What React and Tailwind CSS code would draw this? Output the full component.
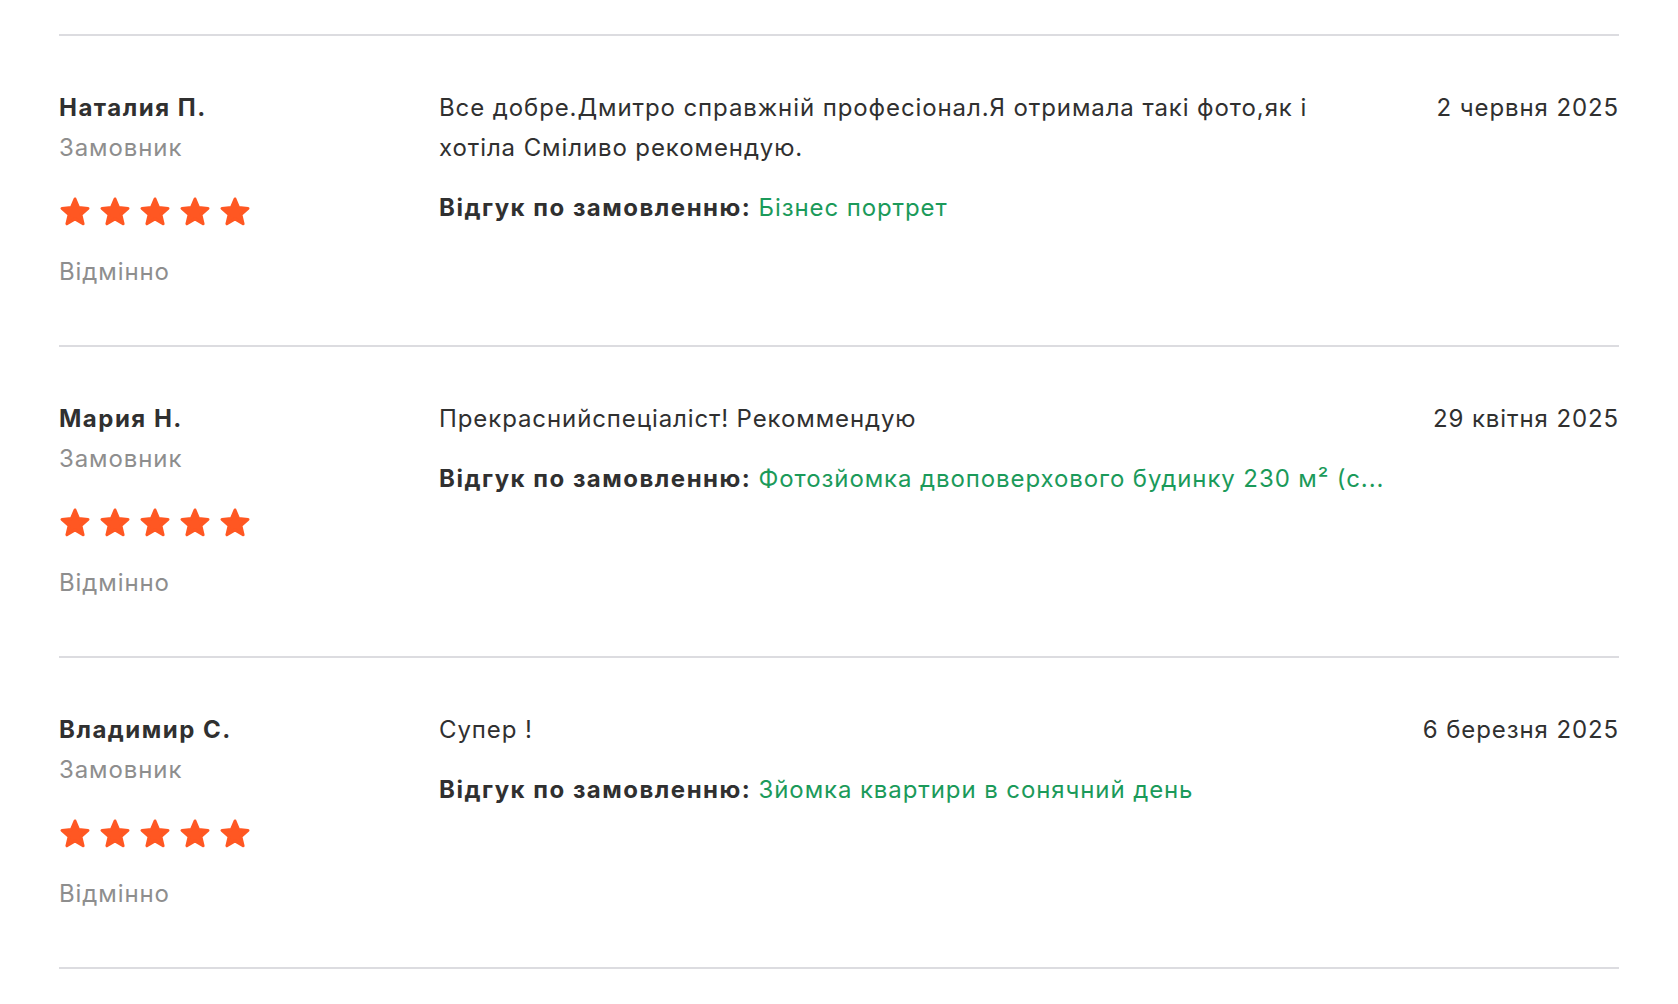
const reviews = [
  {
    name: "Наталия П.",
    text: "Все добре.Дмитро справжній професіонал.Я отримала такі фото,як і хотіла Сміливо рекомендую.",
    order: "Бізнес портрет",
    date: "2 червня 2025",
  },
  {
    name: "Мария Н.",
    text: "Прекраснийспеціаліст! Рекоммендую",
    order: "Фотозйомка двоповерхового будинку 230 м² (с...",
    date: "29 квітня 2025",
  },
  {
    name: "Владимир С.",
    text: "Супер !",
    order: "Зйомка квартири в сонячний день",
    date: "6 березня 2025",
  },
];

const Star = () => (
  <svg width="32" height="32" viewBox="0 0 32 32" className="shrink-0">
    <polygon
      points="16,3 19.6,11.6 29,12.4 21.9,18.6 24.1,27.8 16,22.9 7.9,27.8 10.1,18.6 3,12.4 12.4,11.6"
      fill="#ff5722"
      stroke="#ff5722"
      strokeWidth="3"
      strokeLinejoin="round"
    />
  </svg>
);

const ReviewRow = ({ review }) => (
  <div className="flex border-b-2 border-[#dcdce0] pt-[52px] pb-[53px] text-[24px] leading-[40px] tracking-[0.9px]">
    {/* author column */}
    <div className="w-[380px] shrink-0 flex flex-col">
      <p className="font-bold tracking-[1.5px] text-[#303030]">{review.name}</p>
      <p className="text-[#8e8e8e]">Замовник</p>
      <div className="flex gap-2 mt-[28px]">
        <Star />
        <Star />
        <Star />
        <Star />
        <Star />
      </div>
      <p className="text-[#8e8e8e] mt-6">Відмінно</p>
    </div>

    {/* review text */}
    <div className="flex-1 min-w-0">
      <p className="text-[#303030]">{review.text}</p>
      <p className="mt-5 whitespace-nowrap">
        <span className="font-bold tracking-[1.5px] text-[#303030]">Відгук по замовленню: </span>
        <span className="text-[#1b9a5a]">{review.order}</span>
      </p>
    </div>

    {/* date */}
    <div className="w-[240px] shrink-0 text-right">
      <p className="text-[#303030]">{review.date}</p>
    </div>
  </div>
);

export default function App() {
  return (
    <div className="min-h-screen bg-white font-['Inter','Liberation_Sans',sans-serif]">
      <div className="px-[59px] pt-[34px]">
        <div className="border-t-2 border-[#dcdce0]">
          {reviews.map((review, i) => (
            <ReviewRow key={i} review={review} />
          ))}
        </div>
      </div>
    </div>
  );
}
